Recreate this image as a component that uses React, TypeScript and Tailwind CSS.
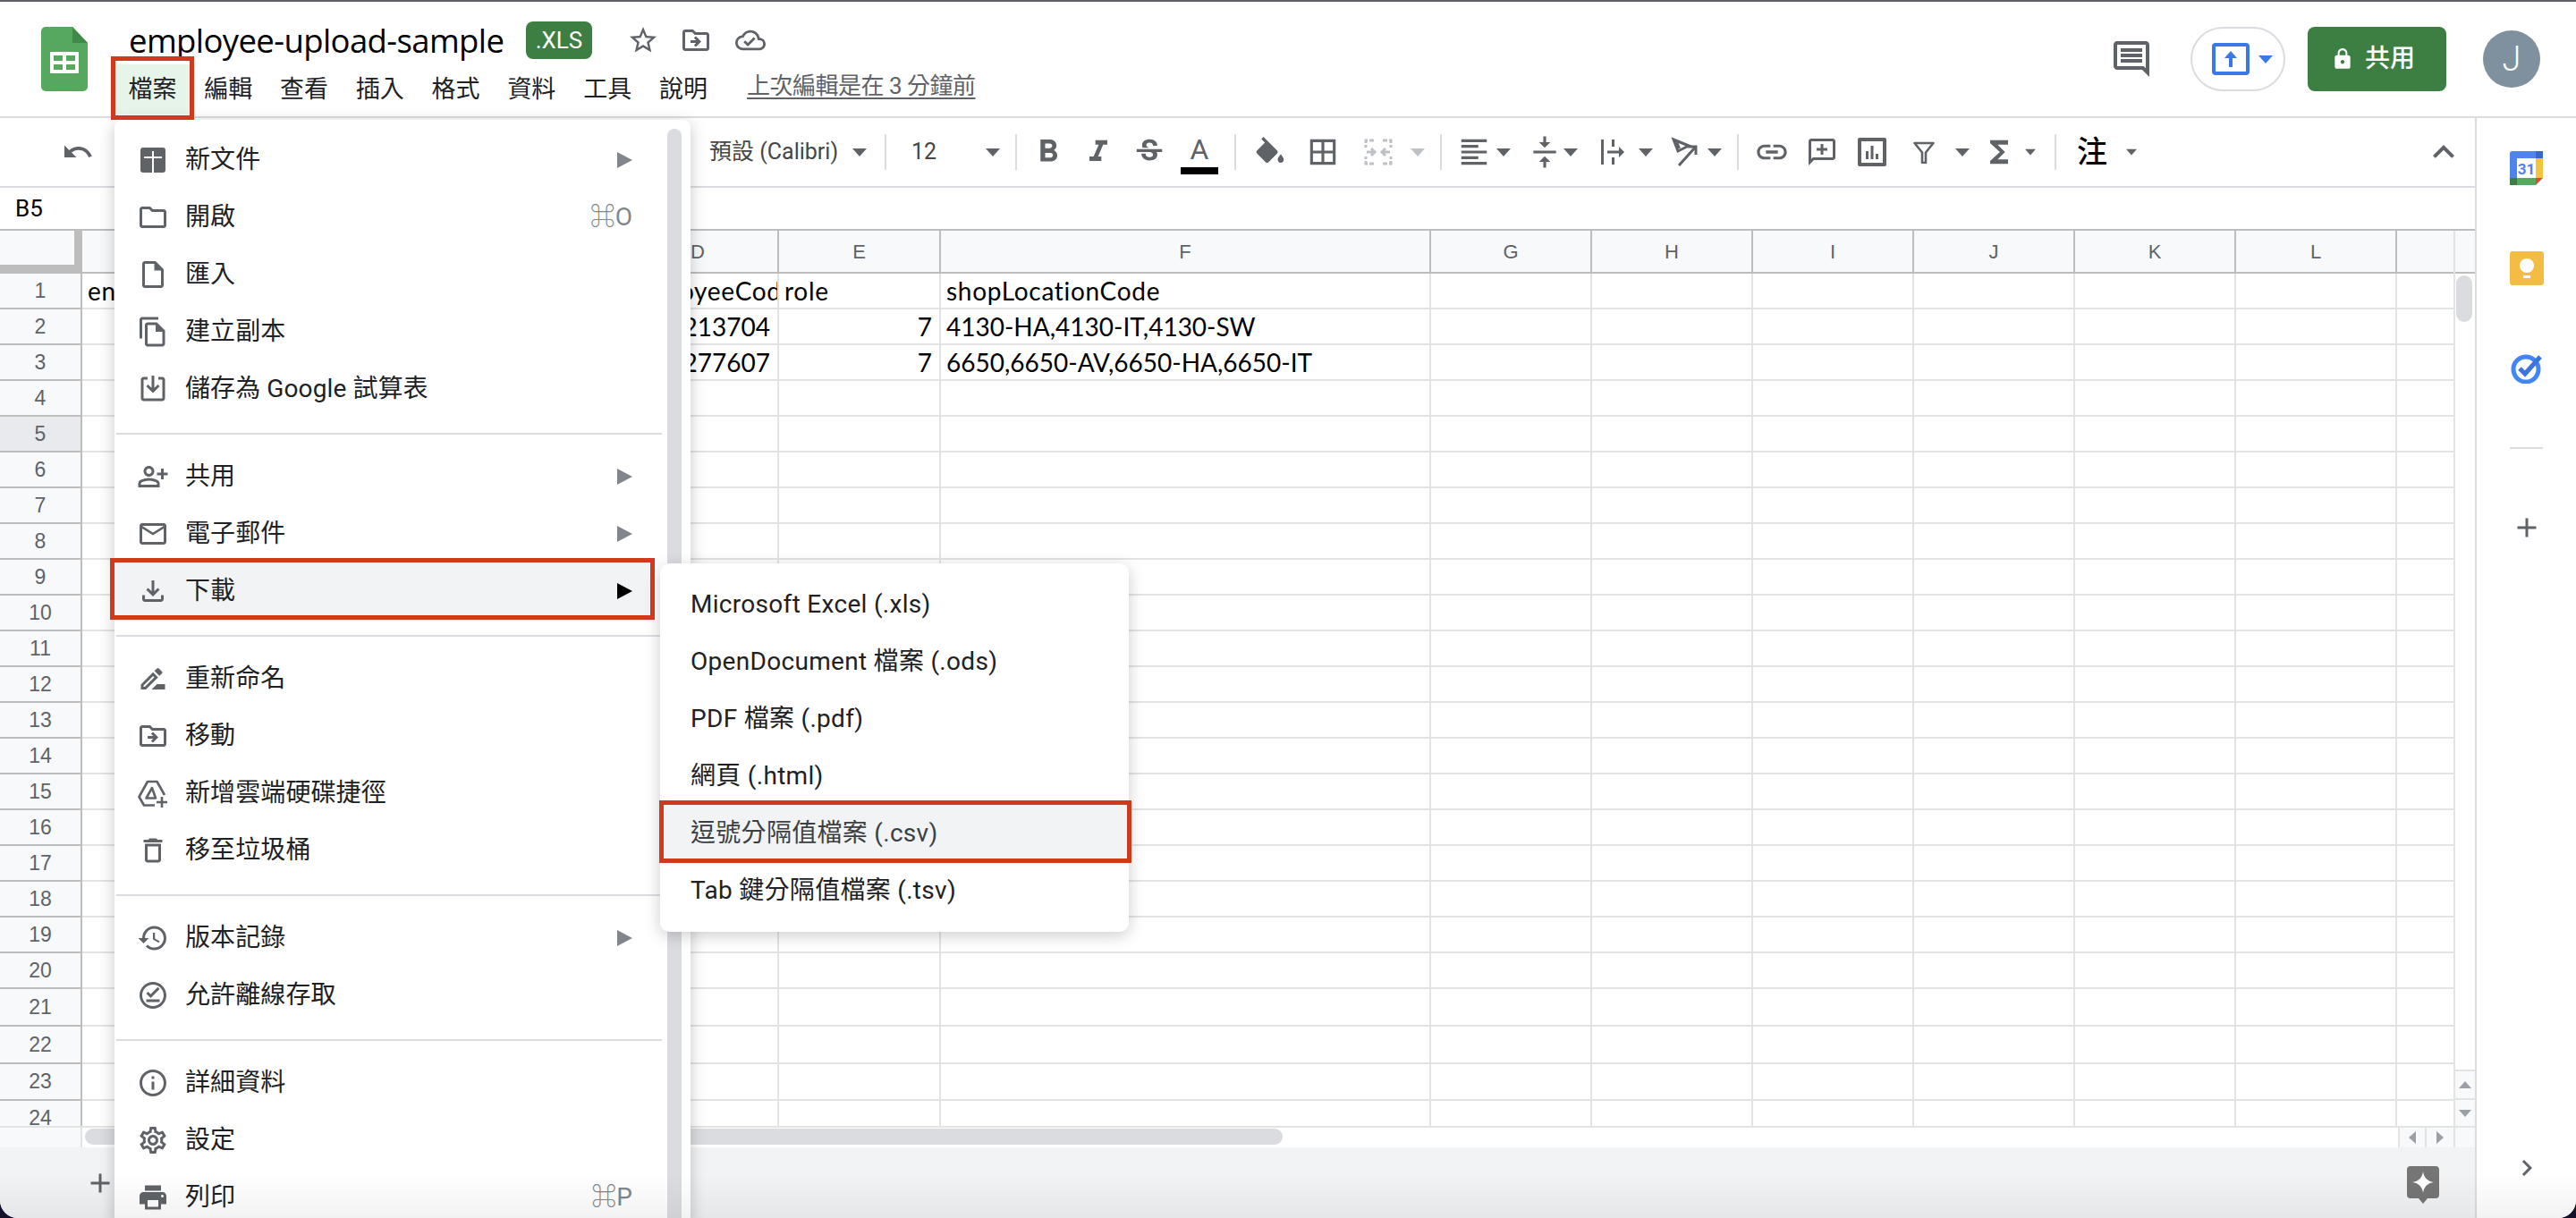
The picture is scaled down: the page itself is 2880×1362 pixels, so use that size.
import React from "react";
import {
  MdUndo, MdStarBorder, MdOutlineDriveFileMove, MdOutlineCloudDone, MdOutlineFolder, MdOutlineInsertDriveFile,
  MdOutlineFileCopy, MdOutlinePersonAddAlt, MdMailOutline, MdOutlineFileDownload, MdOutlineDriveFileRenameOutline,
  MdDeleteOutline, MdHistory, MdInfoOutline, MdOutlineSettings, MdPrint, MdFormatBold,
  MdFormatItalic, MdStrikethroughS, MdBorderAll, MdFormatAlignLeft, MdVerticalAlignCenter, MdLink, MdFunctions,
  MdExpandLess, MdAdd, MdChevronRight, MdLock, MdOutlineOfflinePin,
} from "react-icons/md";

const GRID = "grid grid-cols-[92px_200px_200px_199px_180px_181px_548px_180px_180px_180px_180px_180px_180px_65px]";
const COLS = ["A", "B", "C", "D", "E", "F", "G", "H", "I", "J", "K", "L", ""];

const Tri = ({ className = "ml-0", small = false }: { className?: string; small?: boolean }) => (
  <svg width={small ? 12 : 16} height={small ? 8 : 9} viewBox="0 0 16 9" className={`fill-current text-[#5f6368] shrink-0 ${className}`}>
    <path d="M0 0h16L8 9z" />
  </svg>
);

const Sep = ({ className }: { className: string }) => <div className={`w-[2px] h-[40px] bg-[#dadce0] shrink-0 ${className}`} />;

const Box = ({ className, children }: { className: string; children: React.ReactNode }) => (
  <div className={`h-[40px] flex items-center justify-center shrink-0 text-[#5f6368] ${className}`}>{children}</div>
);

function SaveBox() {
  return (
    <svg width="36" height="36" viewBox="0 0 24 24" fill="currentColor">
      <path d="M19 3h-3v2h3v14H5V5h3V3H5c-1.1 0-2 .9-2 2v14c0 1.1.9 2 2 2h14c1.1 0 2-.9 2-2V5c0-1.1-.9-2-2-2z" />
      <path d="M11 2h2v9.2l2.6-2.6L17 10l-5 5-5-5 1.4-1.4 2.6 2.6z" />
    </svg>
  );
}

function AddBox() {
  return (
    <svg width="36" height="36" viewBox="0 0 36 36">
      <rect x="4" y="4" width="28" height="28" rx="3" fill="currentColor" />
      <path d="M17 8h2v24h-2zM8 14h20v2H8z" fill="#fff" />
    </svg>
  );
}

function DriveAdd() {
  return (
    <svg width="36" height="36" viewBox="0 0 36 36" fill="none" stroke="currentColor" strokeWidth="2.6" strokeLinejoin="round">
      <path d="M31 20L22.5 5H12L2.5 22 8 31.5H20" />
      <path d="M17 12l-6.5 11.5H21z" />
      <path d="M28 22v12M22 28h12" />
    </svg>
  );
}

type Item = { icon: React.ReactNode; label: string; arrow?: boolean; short?: string; active?: boolean };

function Row({ icon, label, arrow, short, active }: Item) {
  return (
    <div className={`h-[64px] w-[604px] flex items-center pl-[25px] pr-[25px] pb-[2px] ${active ? "bg-[#f1f3f4]" : ""}`}>
      <div className="w-[36px] h-[36px] flex items-center justify-center text-[#5f6368] shrink-0">{icon}</div>
      <span className="ml-[18px] text-[28px] text-[#202124] tracking-[0.1px]">{label}</span>
      {short && <span className="ml-auto text-[28px] text-[#80868b]">{short}</span>}
      {arrow && (
        <svg width="17" height="18" viewBox="0 0 17 18" className={`ml-auto ${active ? "fill-black" : "fill-[#80868b]"}`}>
          <path d="M0 0l17 9L0 18z" />
        </svg>
      )}
    </div>
  );
}

const Divider = () => <div className="my-[16px] h-[2px] w-[610px] ml-[2px] bg-[#dadce0]" />;

function FileMenu() {
  const s = 36;
  return (
    <div className="absolute left-[128px] top-[132px] w-[644px] h-[1240px] bg-white rounded-[8px] shadow-[0_4px_18px_rgba(0,0,0,0.22)] pt-[14px]">
      <div className="absolute left-[618px] top-[10px] w-[16px] h-[1240px] rounded-full bg-[#dadce0]" />
      <Row icon={<AddBox />} label="新文件" arrow />
      <Row icon={<MdOutlineFolder size={s} />} label="開啟" short="⌘O" />
      <Row icon={<MdOutlineInsertDriveFile size={s} />} label="匯入" />
      <Row icon={<MdOutlineFileCopy size={s} />} label="建立副本" />
      <Row icon={<SaveBox />} label="儲存為 Google 試算表" />
      <Divider />
      <Row icon={<MdOutlinePersonAddAlt size={s} />} label="共用" arrow />
      <Row icon={<MdMailOutline size={s} />} label="電子郵件" arrow />
      <Row icon={<MdOutlineFileDownload size={s} />} label="下載" arrow active />
      <Divider />
      <Row icon={<MdOutlineDriveFileRenameOutline size={s} />} label="重新命名" />
      <Row icon={<MdOutlineDriveFileMove size={s} />} label="移動" />
      <Row icon={<DriveAdd />} label="新增雲端硬碟捷徑" />
      <Row icon={<MdDeleteOutline size={s} />} label="移至垃圾桶" />
      <Divider />
      <Row icon={<MdHistory size={s} />} label="版本記錄" arrow />
      <Row icon={<MdOutlineOfflinePin size={s} />} label="允許離線存取" />
      <Divider />
      <Row icon={<MdInfoOutline size={s} />} label="詳細資料" />
      <Row icon={<MdOutlineSettings size={s} />} label="設定" />
      <Row icon={<MdPrint size={s} />} label="列印" short="⌘P" />
    </div>
  );
}

function SubMenu() {
  const items = ["Microsoft Excel (.xls)", "OpenDocument 檔案 (.ods)", "PDF 檔案 (.pdf)", "網頁 (.html)", "逗號分隔值檔案 (.csv)", "Tab 鍵分隔值檔案 (.tsv)"];
  return (
    <div className="absolute left-[738px] top-[628px] w-[524px] bg-white rounded-[10px] shadow-[0_4px_18px_rgba(0,0,0,0.2)] py-[14px]">
      {items.map((t, i) => (
        <div key={t} className={`h-[64px] flex items-center pl-[34px] text-[28px] tracking-[0.3px] ${i === 4 ? "bg-[#f1f3f4] text-[#3c4043]" : "text-[#202124]"}`}>{t}</div>
      ))}
    </div>
  );
}

function Header() {
  const menus = ["檔案", "編輯", "查看", "插入", "格式", "資料", "工具", "說明"];
  return (
    <div className="h-[130px] border-b-2 border-[#dadce0] flex shrink-0 bg-white">
      <div className="ml-[46px] mt-[28px] w-[52px] h-[72px] shrink-0">
        <svg width="52" height="72" viewBox="0 0 52 72">
          <path d="M5 0h30l17 18v49a5 5 0 0 1-5 5H5a5 5 0 0 1-5-5V5a5 5 0 0 1 5-5z" fill="#57a85f" />
          <path d="M35 0l17 18-17 0z" fill="#3f8a49" />
          <path d="M10 28h32v24H10zM14 32v6h10v-6zm14 0v6h10v-6zM14 42v6h10v-6zm14 0v6h10v-6z" fill="#fff" fillRule="evenodd" />
        </svg>
      </div>
      <div className="ml-[30px] flex flex-col shrink-0">
        <div className="mt-[22px] h-[42px] flex items-center pl-[16px]">
          <span className="w-[444px] text-[36.5px] text-black leading-none font-['Open_Sans',sans-serif] tracking-[-0.6px] whitespace-nowrap">employee-upload-sample</span>
          <span className="w-[74px] h-[42px] rounded-[8px] bg-[#3d7e42] text-white text-[26px] flex items-center justify-center">.XLS</span>
          <MdStarBorder size={36} className="ml-[39px] text-[#5f6368]" />
          <MdOutlineDriveFileMove size={36} className="ml-[23px] text-[#5f6368]" />
          <MdOutlineCloudDone size={34} className="ml-[26px] text-[#5f6368]" />
        </div>
        <div className="mt-[6px] h-[56px] flex items-center">
          {menus.map((m, i) => (
            <div key={m} className={`w-[84.8px] h-[56px] flex items-center justify-center text-[27px] text-[#202124] ${i === 0 ? "bg-[#e6f4ea] rounded-[4px]" : ""}`}>{m}</div>
          ))}
          <span className="ml-[28.6px] mb-[8px] text-[26px] tracking-[-0.5px] text-[#5f6368] underline underline-offset-4 whitespace-nowrap">上次編輯是在 3 分鐘前</span>
        </div>
      </div>
      <div className="ml-auto h-full flex items-center pr-[40px]">
        <svg width="40" height="40" viewBox="2 2 20 20" className="fill-[#5f6368]">
          <path fillRule="evenodd" d="M22 4c0-1.1-.9-2-2-2H4c-1.1 0-2 .9-2 2v12c0 1.1.9 2 2 2h14l4 4V4zm-2 0v13.17L18.83 16H4V4h16zM6 12h12v2H6zm0-3h12v2H6zm0-3h12v2H6z" />
        </svg>
        <div className="ml-[46px] w-[106px] h-[72px] rounded-[36px] border-2 border-[#dadce0] flex items-center pl-[22px]">
          <svg width="42" height="36" viewBox="0 0 42 36">
            <rect x="2" y="2" width="38" height="32" rx="2" fill="none" stroke="#3b78e7" strokeWidth="4" />
            <path d="M21 9l7 8h-5v10h-4V17h-5z" fill="#3b78e7" />
          </svg>
          <svg width="16" height="9" viewBox="0 0 16 9" className="ml-[10px] fill-[#3b78e7]"><path d="M0 0h16L8 9z" /></svg>
        </div>
        <div className="ml-[25px] w-[155px] h-[72px] rounded-[8px] bg-[#3d7e42] flex items-center pl-[26px] text-white">
          <MdLock size={26} />
          <span className="ml-[12px] text-[28px] font-medium">共用</span>
        </div>
        <div className="ml-[41px] w-[64px] h-[64px] rounded-full bg-[#7f919e] flex items-center justify-center text-white text-[38px] font-light">J</div>
      </div>
    </div>
  );
}

function Toolbar() {
  return (
    <div className="h-[78px] border-b-2 border-[#dadce0] flex items-center shrink-0 bg-white relative">
      <MdUndo size={36} className="ml-[69px] text-[#5f6368] shrink-0" />
      <span className="ml-[688px] w-[160px] text-[25px] text-[#444746] whitespace-nowrap font-['Roboto','Noto_Sans_CJK_TC',sans-serif]">預設 (Calibri)</span>
      <Tri />
      <Sep className="ml-[20px]" />
      <span className="ml-[28px] w-[83px] text-[25px] text-[#444746]">12</span>
      <Tri />
      <Sep className="ml-[17px]" />
      <Box className="ml-[7px] w-[56px]"><MdFormatBold size={42} /></Box>
      <Box className="w-[56px]"><MdFormatItalic size={40} /></Box>
      <Box className="ml-[1px] w-[56px]"><MdStrikethroughS size={38} /></Box>
      <div className="w-[56px] h-[44px] flex flex-col items-center shrink-0 mt-[6px]">
        <span className="text-[32px] leading-[32px] text-[#5f6368] h-[32px] font-['Roboto',sans-serif]">A</span>
        <div className="w-[42px] h-[8px] bg-black mt-[4px]" />
      </div>
      <Sep className="ml-[11px]" />
      <Box className="ml-[10px] w-[56px]">
        <svg width="34" height="34" viewBox="2 0 20 20" fill="currentColor">
          <path d="M16.56 8.94 7.62 0 6.21 1.41l2.38 2.38-5.15 5.15c-.59.59-.59 1.54 0 2.12l5.5 5.5c.29.29.68.44 1.06.44s.77-.15 1.06-.44l5.5-5.5c.59-.58.59-1.53 0-2.12zM19 11.5s-2 2.17-2 3.5c0 1.1.9 2 2 2s2-.9 2-2c0-1.33-2-3.5-2-3.5z" />
        </svg>
      </Box>
      <Box className="ml-[3px] w-[56px]"><MdBorderAll size={38} /></Box>
      <Box className="ml-[6px] w-[56px]">
        <svg width="32" height="30" viewBox="0 0 32 30" fill="none" stroke="#bdc1c6" strokeWidth="3">
          <path d="M11 2H2v8M21 2h9v8M11 28H2v-8M21 28h9v-8" strokeDasharray="5 2" />
          <path d="M3 15h8M8 11l4 4-4 4M29 15h-8M24 11l-4 4 4 4" />
        </svg>
      </Box>
      <Tri className="ml-[8px] !text-[#bdc1c6]" />
      <Sep className="ml-[17px]" />
      <Box className="ml-[16px] w-[40px]"><MdFormatAlignLeft size={38} /></Box>
      <Tri className="ml-[5px]" />
      <Box className="ml-[18px] w-[40px]"><MdVerticalAlignCenter size={38} /></Box>
      <Tri className="ml-[1px]" />
      <Box className="ml-[19px] w-[40px]">
        <svg width="30" height="30" viewBox="0 0 30 30" fill="currentColor">
          <path d="M2 1h3v28H2zM14 1h3v8h-3zM14 21h3v8h-3zM9 13.5h13V9l6 6-6 6v-4.5H9z" />
        </svg>
      </Box>
      <Tri className="ml-[9px]" />
      <Box className="ml-[15px] w-[40px]">
        <svg width="32" height="34" viewBox="0 0 32 34" fill="none" stroke="currentColor" strokeWidth="3">
          <path d="M4 3l17 7-12 6zM7.5 6l3 7" />
          <path d="M10 32L28 12M20 11h9v9" />
        </svg>
      </Box>
      <Tri className="ml-[6px]" />
      <Sep className="ml-[17px]" />
      <Box className="ml-[17px] w-[40px]"><MdLink size={42} /></Box>
      <Box className="ml-[16px] w-[40px]">
        <svg width="30" height="30" viewBox="2 2 20 20" fill="currentColor">
          <path fillRule="evenodd" d="M20 2H4c-1.1 0-2 .9-2 2v18l4-4h14c1.1 0 2-.9 2-2V4c0-1.1-.9-2-2-2zm0 14H5.17L4 17.17V4h16v12zM11 6h2v3h3v2h-3v3h-2v-3H8V9h3z" />
        </svg>
      </Box>
      <Box className="ml-[16px] w-[40px]">
        <svg width="32" height="32" viewBox="0 0 32 32" fill="currentColor">
          <path fillRule="evenodd" d="M2 0h28a2 2 0 0 1 2 2v28a2 2 0 0 1-2 2H2a2 2 0 0 1-2-2V2a2 2 0 0 1 2-2zm2 4v24h24V4z" />
          <path d="M9 15h3v9H9zM14.5 9h3v15h-3zM20 18h3v6h-3z" />
        </svg>
      </Box>
      <Box className="ml-[18px] w-[40px]">
        <svg width="24" height="25" viewBox="0 0 24 25" fill="none" stroke="currentColor" strokeWidth="2.6">
          <path d="M1.5 2h21l-8.5 10.5V24h-4V12.5z" strokeLinejoin="round" />
        </svg>
      </Box>
      <Tri className="ml-[15px]" />
      <Box className="ml-[13px] w-[40px]"><MdFunctions size={44} /></Box>
      <Tri small className="ml-[9px]" />
      <Sep className="ml-[21px]" />
      <span className="ml-[23px] w-[36px] text-[34px] font-medium text-black shrink-0">注</span>
      <Tri small className="ml-[19px]" />
      <MdExpandLess size={48} className="absolute left-[2708px] top-[14px] text-[#5f6368]" />
    </div>
  );
}

function Grid() {
  const rows = Array.from({ length: 24 }, (_, i) => i + 1);
  const cellText = (r: number, c: number): { t: string; right?: boolean } | null => {
    if (r === 1) return ({ 0: { t: "en" }, 3: { t: "employeeCode" }, 4: { t: "role" }, 5: { t: "shopLocationCode" } } as any)[c] ?? null;
    if (r === 2) return ({ 3: { t: "21213704", right: true }, 4: { t: "7", right: true }, 5: { t: "4130-HA,4130-IT,4130-SW" } } as any)[c] ?? null;
    if (r === 3) return ({ 3: { t: "21277607", right: true }, 4: { t: "7", right: true }, 5: { t: "6650,6650-AV,6650-HA,6650-IT" } } as any)[c] ?? null;
    return null;
  };
  return (
    <div className="w-[2745px] h-full overflow-hidden">
      <div className={`${GRID} h-[48px] bg-[#f8f9fa] border-b-2 border-[#bdbdbd] text-[22px] text-[#5f6368] font-['Liberation_Sans',sans-serif]`}>
        <div className="relative border-r-[9px] border-[#bdbdbd] h-[46px]">
          <div className="absolute left-0 right-0 bottom-0 h-[8px] bg-[#bdbdbd]" />
        </div>
        {COLS.map((c, i) => (
          <div key={i} className={`flex items-center justify-center ${c ? "border-r-2 border-[#bdbdbd]" : ""}`}>{c}</div>
        ))}
      </div>
      {rows.map((r) => (
        <div key={r} className={`${GRID} ${r === 21 || r === 22 ? "h-[42px]" : r === 23 ? "h-[41px]" : "h-[40px]"}`}>
          <div className={`flex items-center justify-center border-r-2 border-b-2 border-[#bdbdbd] text-[23px] text-[#5f6368] font-['Liberation_Sans',sans-serif] ${r === 5 ? "bg-[#e8eaed]" : "bg-[#f8f9fa]"}`}>{r}</div>
          {COLS.map((_, c) => {
            const v = cellText(r, c);
            return (
              <div key={c} className={`flex items-center overflow-hidden whitespace-nowrap border-b-2 border-[#e2e3e3] text-[28px] text-black font-['Lato',sans-serif] pl-[6px] pr-[8px] ${r === 1 ? "tracking-[0.7px]" : ""} ${c < 12 ? "border-r-2" : ""} ${v?.right ? "justify-end" : ""}`}>
                {v?.t}
              </div>
            );
          })}
        </div>
      ))}
    </div>
  );
}

function VScroll() {
  return (
    <div className="w-[24px] h-full border-l-2 border-[#e2e3e3] flex flex-col shrink-0 border-r-0">
      <div className="h-[48px] bg-[#f8f9fa] border-b-2 border-[#bdbdbd] shrink-0" />
      <div className="flex-1">
        <div className="mt-[2px] ml-[1px] w-[18px] h-[52px] rounded-full bg-[#dadce0]" />
      </div>
      <div className="h-[32px] bg-[#f8f9fa] border-t-2 border-[#e2e3e3] flex items-center justify-center shrink-0">
        <svg width="14" height="8" viewBox="0 0 14 8" className="fill-[#9aa0a6]"><path d="M7 0l7 8H0z" /></svg>
      </div>
      <div className="h-[31px] bg-[#f8f9fa] border-t-2 border-[#e2e3e3] flex items-center justify-center shrink-0">
        <svg width="14" height="8" viewBox="0 0 14 8" className="fill-[#9aa0a6]"><path d="M0 0h14L7 8z" /></svg>
      </div>
    </div>
  );
}

function HScroll() {
  return (
    <div className="h-[24px] border-t-2 border-[#e2e3e3] flex shrink-0 bg-white">
      <div className="w-[92px] bg-[#f8f9fa] border-r-2 border-[#e2e3e3] shrink-0" />
      <div className="w-[2589px] pt-[1px] pl-[3px]">
        <div className="w-[1339px] h-[18px] rounded-full bg-[#dadce0]" />
      </div>
      <div className="w-[32px] bg-[#f8f9fa] border-x-2 border-[#e2e3e3] flex items-center justify-center shrink-0">
        <svg width="8" height="14" viewBox="0 0 8 14" className="fill-[#9aa0a6]"><path d="M8 0v14L0 7z" /></svg>
      </div>
      <div className="w-[32px] bg-[#f8f9fa] border-r-2 border-[#e2e3e3] flex items-center justify-center shrink-0">
        <svg width="8" height="14" viewBox="0 0 8 14" className="fill-[#9aa0a6]"><path d="M0 0v14l8-7z" /></svg>
      </div>
      <div className="flex-1 bg-[#f8f9fa]" />
    </div>
  );
}

function SheetBar() {
  return (
    <div className="flex-1 bg-[#f1f3f4] flex items-center pl-[94px] pr-[40px] min-h-0">
      <MdAdd size={36} className="text-[#5f6368]" />
      <svg width="36" height="42" viewBox="0 0 36 42" className="ml-auto mt-[4px]">
        <path d="M4 0h28a4 4 0 0 1 4 4v28a4 4 0 0 1-4 4h-9l-5 6-5-6H4a4 4 0 0 1-4-4V4a4 4 0 0 1 4-4z" fill="#757575" />
        <path d="M18 6c1 7 5 11 12 12-7 1-11 5-12 12-1-7-5-11-12-12 7-1 11-5 12-12z" fill="#fff" />
      </svg>
    </div>
  );
}

function Side() {
  return (
    <div className="w-[111px] flex flex-col items-center pt-[37px] shrink-0 bg-white">
      <svg width="37" height="38" viewBox="0 0 37 38">
        <rect width="37" height="38" rx="3" fill="#4f84ed" />
        <rect x="8" y="8" width="21" height="22" fill="#fff" />
        <rect x="29" y="8" width="8" height="22" fill="#f6c33f" />
        <rect x="8" y="30" width="21" height="8" fill="#57a85f" />
        <rect y="30" width="8" height="8" fill="#3b7d44" />
        <rect x="29" width="8" height="8" fill="#3667c9" />
        <path d="M29 30h8l-8 8z" fill="#dd4b37" />
        <path d="M37 38h-8l8-8z" fill="#fff" />
        <text x="18.5" y="26" textAnchor="middle" fontSize="17" fontWeight="700" fill="#4f84ed" fontFamily="Roboto, sans-serif">31</text>
      </svg>
      <svg width="38" height="38" viewBox="0 0 38 38" className="mt-[74px]">
        <rect width="38" height="38" rx="3" fill="#f2bd42" />
        <circle cx="19" cy="16" r="8" fill="#fff" />
        <path d="M15 20h8v3h-8zM15 27h8v3h-8z" fill="#fff" />
      </svg>
      <svg width="36" height="34" viewBox="0 0 36 34" className="mt-[76px]">
        <circle cx="17" cy="18" r="14" fill="none" stroke="#4285f4" strokeWidth="5" />
        <path d="M10 17l6 6L33 4" fill="none" stroke="#3a74dc" strokeWidth="5" />
      </svg>
      <div className="mt-[71px] w-[37px] h-[2px] bg-[#dadce0]" />
      <MdAdd size={36} className="mt-[70px] text-[#5f6368]" />
      <MdChevronRight size={36} className="mt-auto mb-[38px] text-[#5f6368]" />
    </div>
  );
}

const Red = ({ className }: { className: string }) => <div className={`absolute border-[5px] border-[#cf3a1f] ${className}`} />;

export default function App() {
  return (
    <div className="w-[2880px] h-[1362px] bg-[#15112b] overflow-hidden font-[Roboto,'Noto_Sans_CJK_TC','DejaVu_Sans',sans-serif]">
      <div className="relative w-full h-full bg-white rounded-b-[20px] overflow-hidden border-t-2 border-[#5f6064] flex flex-col">
        <Header />
        <div className="flex flex-1 min-h-0">
          <div className="w-[2769px] border-r-2 border-[#dadce0] flex flex-col shrink-0">
            <Toolbar />
            <div className="h-[48px] border-b-2 border-[#bdbdbd] flex items-center pl-[17px] text-[26px] text-black shrink-0">B5</div>
            <div className="h-[1001px] flex shrink-0">
              <Grid />
              <VScroll />
            </div>
            <HScroll />
            <SheetBar />
          </div>
          <Side />
        </div>
        <FileMenu />
        <SubMenu />
        <div className="absolute left-0 right-0 bottom-0 h-[50px] bg-gradient-to-b from-transparent to-black/5 pointer-events-none" />
        <Red className="left-[124px] top-[61px] w-[93px] h-[71px]" />
        <Red className="left-[123px] top-[622px] w-[609px] h-[69px]" />
        <Red className="left-[737px] top-[893px] w-[528px] h-[70px]" />
      </div>
    </div>
  );
}
